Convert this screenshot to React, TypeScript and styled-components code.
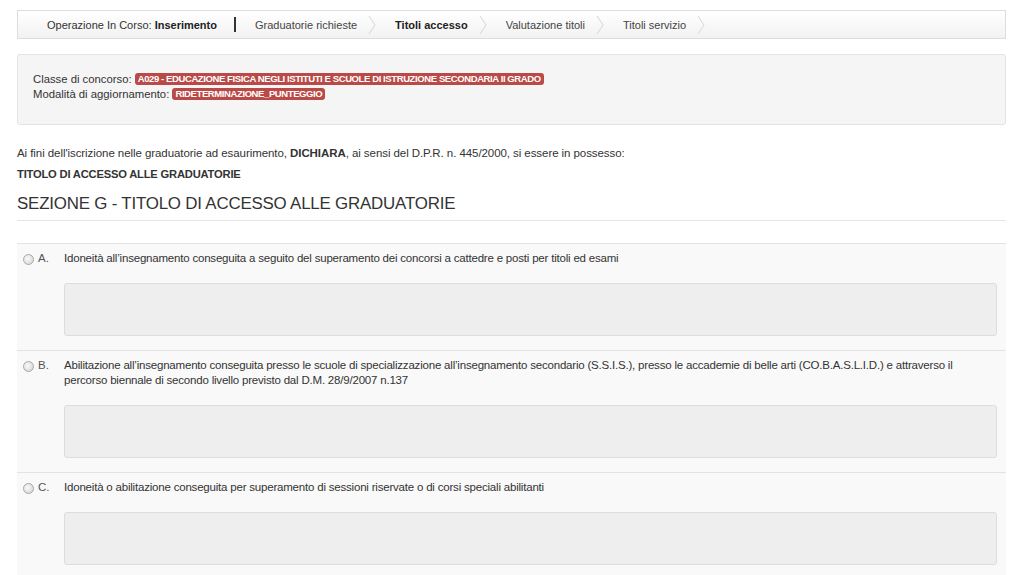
import React from 'react'
import styled, { createGlobalStyle } from 'styled-components'

const GlobalStyle = createGlobalStyle`
  html, body { margin: 0; padding: 0; background: #fff; }
  body {
    font-family: "Liberation Sans", Arial, sans-serif;
    font-size: 12px;
    color: #333;
  }
`

const Page = styled.div`
  padding: 10px 17px 0 17px;
  width: 989px;
`

const Crumbs = styled.div`
  display: flex;
  align-items: center;
  height: 27px;
  border: 1px solid #ddd;
  background: linear-gradient(#fff, #f2f2f2);
  padding-left: 29px;
  font-size: 11px;
`

const Operation = styled.span`
  color: #333;
  b { font-weight: bold; color: #222; }
`

const Divider = styled.span`
  width: 2px;
  height: 15px;
  background: #333;
  margin: 0 19px 0 17px;
`

const Crumb = styled.span<{ $active?: boolean }>`
  color: ${p => (p.$active ? '#222' : '#444')};
  font-weight: ${p => (p.$active ? 'bold' : 'normal')};
`

const ChevronBox = styled.span`
  display: inline-flex;
  margin: 0 19px 0 11px;
`

const Chevron = () => (
  <ChevronBox>
    <svg width="8" height="20" viewBox="0 0 8 20">
      <path d="M1 1 L7 10 L1 19" fill="none" stroke="#d6d6d6" strokeWidth="1" />
    </svg>
  </ChevronBox>
)

const Well = styled.div`
  margin-top: 15px;
  background: #f5f5f5;
  border: 1px solid #e3e3e3;
  border-radius: 3px;
  padding: 17px 15px 22px 15px;
  line-height: 15px;
  font-size: 11.3px;
`

const Badge = styled.span`
  display: inline-block;
  background: #b94a48;
  color: #fff;
  font-size: 9.5px;
  font-weight: bold;
  line-height: 12px;
  padding: 0 3px;
  border-radius: 3px;
  vertical-align: 1px;
  letter-spacing: -0.4px;
`

const Intro = styled.p`
  margin: 21px 0 0 0;
  font-size: 11.5px;
  line-height: 14px;
  letter-spacing: -0.07px;
`

const SubTitle = styled.p`
  margin: 8px 0 0 0;
  font-size: 11.2px;
  font-weight: bold;
  color: #333;
  letter-spacing: -0.2px;
`

const Heading = styled.h3`
  margin: 14px 0 0 0;
  padding-bottom: 6px;
  font-size: 16.9px;
  font-weight: normal;
  color: #333;
  border-bottom: 1px solid #e5e5e5;
  letter-spacing: -0.2px;
`

const List = styled.div`
  margin-top: 22px;
`

const Option = styled.div`
  display: grid;
  grid-template-columns: 47px 1fr;
  background: #f9f9f9;
  border-top: 1px solid #e3e3e3;
  padding: 7px 9px 14px 0;
`

const Marker = styled.div`
  display: flex;
  align-items: flex-start;
  gap: 4px;
  padding-left: 6px;
  color: #555;
  font-size: 11.5px;
  line-height: 15px;
`

const Radio = styled.span`
  width: 9px;
  height: 9px;
  margin-top: 3px;
  border-radius: 50%;
  border: 1px solid #a8a8a8;
  background: radial-gradient(circle at 40% 40%, #fafafa, #d0d0d0);
`

const Body = styled.div`
  font-size: 11.5px;
  line-height: 15px;
  color: #333;
  letter-spacing: -0.2px;
`

const Field = styled.div`
  margin-top: 17px;
  height: 51px;
  background: #eee;
  border: 1px solid #ddd;
  border-radius: 3px;
`

const options = [
  {
    key: 'A.',
    text: 'Idoneità all\u2019insegnamento conseguita a seguito del superamento dei concorsi a cattedre e posti per titoli ed esami',
  },
  {
    key: 'B.',
    text: 'Abilitazione all\u2019insegnamento conseguita presso le scuole di specializzazione all\u2019insegnamento secondario (S.S.I.S.), presso le accademie di belle arti (CO.B.A.S.L.I.D.) e attraverso il percorso biennale di secondo livello previsto dal D.M. 28/9/2007 n.137',
  },
  {
    key: 'C.',
    text: 'Idoneità o abilitazione conseguita per superamento di sessioni riservate o di corsi speciali abilitanti',
  },
]

export default function App() {
  return (
    <>
      <GlobalStyle />
      <Page>
        <Crumbs>
          <Operation>
            Operazione In Corso: <b>Inserimento</b>
          </Operation>
          <Divider />
          <Crumb>Graduatorie richieste</Crumb>
          <Chevron />
          <Crumb $active>Titoli accesso</Crumb>
          <Chevron />
          <Crumb>Valutazione titoli</Crumb>
          <Chevron />
          <Crumb>Titoli servizio</Crumb>
          <Chevron />
        </Crumbs>

        <Well>
          Classe di concorso:{' '}
          <Badge>A029 - EDUCAZIONE FISICA NEGLI ISTITUTI E SCUOLE DI ISTRUZIONE SECONDARIA II GRADO</Badge>
          <br />
          Modalità di aggiornamento: <Badge>RIDETERMINAZIONE_PUNTEGGIO</Badge>
        </Well>

        <Intro>
          Ai fini dell'iscrizione nelle graduatorie ad esaurimento, <b>DICHIARA</b>, ai sensi del D.P.R. n. 445/2000, si essere in possesso:
        </Intro>
        <SubTitle>TITOLO DI ACCESSO ALLE GRADUATORIE</SubTitle>
        <Heading>SEZIONE G - TITOLO DI ACCESSO ALLE GRADUATORIE</Heading>

        <List>
          {options.map(o => (
            <Option key={o.key}>
              <Marker>
                <Radio />
                {o.key}
              </Marker>
              <div>
                <Body>{o.text}</Body>
                <Field />
              </div>
            </Option>
          ))}
        </List>
      </Page>
    </>
  )
}
